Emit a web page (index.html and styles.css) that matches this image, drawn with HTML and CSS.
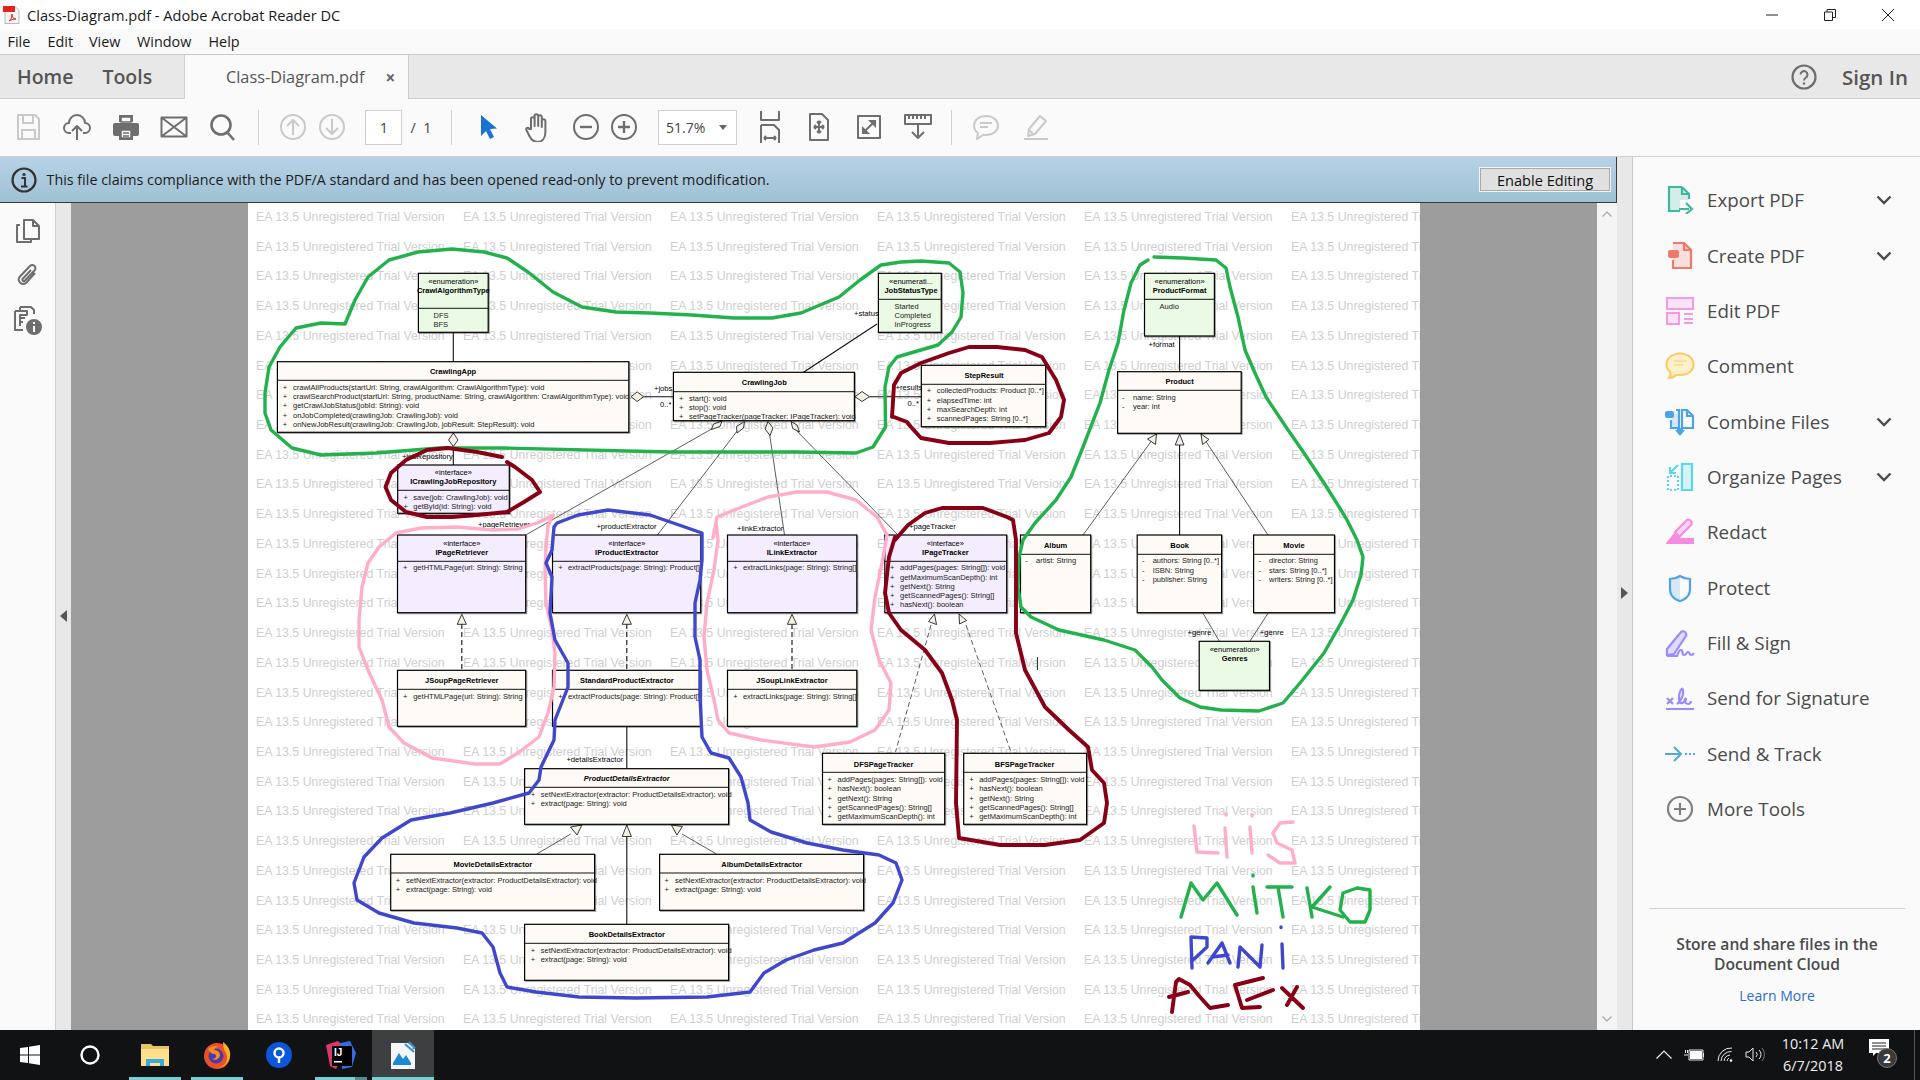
FILE: index.html
```html
<!DOCTYPE html>
<html lang="en">
<head>
<meta charset="utf-8">
<title>Class-Diagram.pdf - Adobe Acrobat Reader DC</title>
<link rel="stylesheet" href="styles.css">
</head>
<body>
<div class="app">
  <header class="titlebar">
    <svg class="pdf-ico" viewBox="0 0 18 18" width="18" height="18"><path class="pdf-doc" d="M2 .5h10l4 4v13H2z"/><rect class="pdf-top" x="0" y="0" width="12" height="6"/><path class="pdf-glyph" d="M6 15c2-1 3-4 3-7 0 3 1 5 4 5-3 0-5 1-7 2z"/></svg>
    <span class="title-text">Class-Diagram.pdf - Adobe Acrobat Reader DC</span>
    <div class="winctl">
      <svg viewBox="0 0 12 12" width="12" height="12"><path d="M0 6h12"/></svg>
      <svg viewBox="0 0 12 12" width="12" height="12"><path d="M.5 3h8v8.500h-8zM3 3V.5h8.500v8H8.500"/></svg>
      <svg viewBox="0 0 12 12" width="12" height="12"><path d="M0 0l12 12M12 0L0 12"/></svg>
    </div>
  </header>

  <nav class="menubar"><span>File</span><span>Edit</span><span>View</span><span>Window</span><span>Help</span></nav>

  <div class="tabbar">
    <div class="tab-home"><span>Home</span><span>Tools</span></div>
    <div class="tab-doc"><span class="tab-name">Class-Diagram.pdf</span><span class="tab-x">×</span></div>
    <div class="tab-right">
      <svg viewBox="0 0 26 26" width="26" height="26"><circle class="help-ring" cx="13" cy="13" r="11.500"/><path class="help-q" d="M9.500 10.500a3.500 3.500 0 1 1 5.500 3c-1.300.9-2 1.400-2 3"/><circle class="help-dot" cx="13" cy="19.500" r="1.200"/></svg>
      <span class="signin">Sign In</span>
    </div>
  </div>

  <div class="toolbar">
    <div class="tb-group g-file">
      <span class="tb-btn off"><svg class="ic" viewBox="0 0 28 28" width="28" height="28"><path d="M4 2h17l4 4v20H4zM9 2v8h10V2M8 26v-9h13v9"/></svg></span>
      <span class="tb-btn"><svg class="ic" viewBox="0 0 28 28" width="28" height="28"><path d="M8 20H6a5 5 0 0 1 0-10 8 8 0 0 1 16 0 5 5 0 0 1 0 10h-2M14 27V13M9 18l5-5 5 5"/></svg></span>
      <span class="tb-btn"><svg viewBox="0 0 28 28" width="28" height="28"><path class="ic-fill" d="M7 2h14v7H7zM3 10h22a2 2 0 0 1 2 2v9a2 2 0 0 1-2 2h-4v4H7v-4H3a2 2 0 0 1-2-2v-9a2 2 0 0 1 2-2z"/><path class="ic-white" d="M9 4h10v5H9zM9 17h10v8H9z"/><path class="ic-line" d="M11 20h6M11 23h6"/></svg></span>
      <span class="tb-btn"><svg class="ic" viewBox="0 0 28 28" width="28" height="28"><path d="M1.500 4.500h25v19h-25zM1.500 4.500L26.500 23.500M26.500 4.500L1.500 23.500"/></svg></span>
      <span class="tb-btn"><svg class="ic thick" viewBox="0 0 28 28" width="28" height="28"><circle cx="12" cy="12" r="9.500"/><path d="M18 19l7 8"/></svg></span>
    </div>
    <span class="tb-sep sep-a"></span>
    <div class="tb-group g-nav">
      <span class="tb-btn off"><svg class="ic" viewBox="0 0 28 28" width="28" height="28"><circle cx="14" cy="14" r="12"/><path d="M14 22V7M8 13l6-6 6 6"/></svg></span>
      <span class="tb-btn off"><svg class="ic" viewBox="0 0 28 28" width="28" height="28"><circle cx="14" cy="14" r="12"/><path d="M14 6v15M8 15l6 6 6-6"/></svg></span>
    </div>
    <span class="page-input">1</span>
    <span class="page-total">/&nbsp;&nbsp;1</span>
    <span class="tb-sep sep-b"></span>
    <div class="tb-group g-select">
      <span class="tb-btn"><svg viewBox="0 0 18 26" width="18" height="26"><path class="ic-blue" d="M1 1v21l5-5 4 8 4-2-4-8 7-.5z"/></svg></span>
      <span class="tb-btn"><svg class="ic" viewBox="0 0 28 30" width="28" height="30"><path d="M8 17V7a1.800 1.800 0 0 1 3.600 0v7-10a1.800 1.800 0 0 1 3.600 0v10-9a1.800 1.800 0 0 1 3.600 0v10-6a1.800 1.800 0 0 1 3.600 0v11c0 6-3 10-8 10-4 0-6-2-8-6l-3-6c-1-2 2-3 3-1z"/></svg></span>
    </div>
    <div class="tb-group g-zoom">
      <span class="tb-btn"><svg class="ic" viewBox="0 0 28 28" width="28" height="28"><circle cx="14" cy="14" r="12"/><path class="bold" d="M8 14h12"/></svg></span>
      <span class="tb-btn"><svg class="ic" viewBox="0 0 28 28" width="28" height="28"><circle cx="14" cy="14" r="12"/><path class="bold" d="M8 14h12M14 8v12"/></svg></span>
    </div>
    <span class="zoom-box"><span>51.7%</span><i class="zoom-caret"></i></span>
    <div class="tb-group g-view">
      <span class="tb-btn"><svg class="ic" viewBox="0 0 22 32" width="22" height="32"><path d="M2 0v9h18V0M2 14h13l5 5v13M2 32V14M5 27h12M5 27l2-2M5 27l2 2M17 27l-2-2M17 27l-2 2"/></svg></span>
      <span class="tb-btn"><svg class="ic" viewBox="0 0 24 30" width="24" height="30"><path d="M3 2h12l6 6v20H3zM12 9v12M7 15h10M12 9l-2 2M12 9l2 2M12 21l-2-2M12 21l2-2M7 15l2-2M7 15l2 2M17 15l-2-2M17 15l-2 2"/></svg></span>
      <span class="tb-btn"><svg viewBox="0 0 26 26" width="26" height="26"><path class="ic" d="M2 2h22v22H2z"/><path class="ic-fill" d="M6 20v-8l8 8zM20 6v8l-8-8z"/><path class="ic" d="M9 17l8-8"/></svg></span>
      <span class="tb-btn"><svg class="ic" viewBox="0 0 30 30" width="30" height="30"><path d="M2 3h26v9H2zM6 3v4M10 3v4M14 3v4M18 3v4M22 3v4M15 12v14M9 20l6 6 6-6"/></svg></span>
    </div>
    <span class="tb-sep sep-c"></span>
    <div class="tb-group g-annot">
      <span class="tb-btn off"><svg class="ic" viewBox="0 0 28 26" width="28" height="26"><path d="M14 2c7 0 12 4 12 9.500S21 21 14 21h-3l-6 4 1-6c-3-2-4-5-4-7.500C2 6 7 2 14 2zM8 9h12M8 13h8"/></svg></span>
      <span class="tb-btn off"><svg class="ic" viewBox="0 0 28 28" width="28" height="28"><path d="M18 3l6 5-11 13-7 2 1-7zM6 16l6 6M2 26h24"/></svg></span>
    </div>
  </div>

  <main class="main">
    <div class="doc-col">
      <div class="banner">
        <svg viewBox="0 0 26 26" width="26" height="26"><circle class="info-ring" cx="13" cy="13" r="11.500"/><circle class="info-mark" cx="13" cy="7.500" r="1.600"/><path class="info-stem" d="M10.500 11h3.500v8M10 19.500h6.500"/></svg>
        <span class="banner-text">This file claims compliance with the PDF/A standard and has been opened read-only to prevent modification.</span>
        <span class="enable-btn">Enable Editing</span>
      </div>
      <div class="doc-row">
        <aside class="leftnav">
          <svg class="ic" viewBox="0 0 26 26" width="26" height="26"><path d="M9 2h9l6 6v13H9zM18 2v6h6M5 7H2v17h14v-3"/></svg>
          <svg class="ic" viewBox="0 0 26 26" width="26" height="26"><path d="M20 11L11 21a4.500 4.500 0 0 1-6.500-6L15 4a3 3 0 0 1 4.500 4.500L9.500 19a1.500 1.500 0 0 1-2-2L16 8"/></svg>
          <svg class="ic" viewBox="0 0 30 30" width="30" height="30"><path d="M2 5h12v4H7v11M2 5v19h8M7 1h11l3 3v4M7 1v4M7 12h5M7 16h3"/><circle class="ic-fill" cx="21" cy="21" r="8"/><path class="ic-wh" d="M21 20v6M21 16v2"/></svg>
        </aside>
        <div class="collapse-l"><i class="tri-left"></i></div>
        <div class="canvas">
          <div class="page">
            <div class="watermark"></div>
            <svg class="diagram" viewBox="248 203 1172 827" width="1172" height="827">
              <g class="links">
                <path d="M453.300 332v30M643.500 396.700h30M869.500 396.700h52M453.300 446v19M877 324l-73.500 48.300M1179.600 336v36M1179.600 445v90M626.800 726v43M626.800 836v88"/>
                <path class="thin" d="M715 427L525.700 535M739.500 428L657.400 535M769 430L784.500 535M794 428L898 535M1156.500 434L1083 535M1201 434L1268 535M1203 613.300L1219.200 641M1268 613.300L1250 641M570.700 834L536.800 854M682 834L716.400 854"/>
                <path class="dash" d="M461.800 624v46M626.800 624v46M792 624v46"/>
                <path class="dash thin" d="M931 625L895.500 752M966 625L1011 752"/>
              </g>
              <g class="arrows">
                <path d="M631 396.700l6.200-4.800 6.300 4.800-6.300 4.800zM448.600 440l4.700-7 4.700 7-4.700 6.500zM855 396.700l7-5.200 7.500 5.200-7.500 4.800z"/>
                <path d="M722 421l-2 5.500-8.500 3 2-5.500zM744.500 421.500l-1 6.500-6.500 5-.5-6.500zM768 421.500l5 6.500-3 7.500-5-6.500zM791 421.500l6 3.500 2.500 7-6.800-3.500z"/>
                <path d="M1156.500 434l-1 10.500-8-5.500zM1179.600 434l4.400 11h-8.800zM1201 434l8 5.500-6.500 5zM461.800 614.300l4.600 10h-9.200zM626.800 614.300l4.600 10h-9.200zM792 614.300l4.600 10h-9.200zM934.500 614l2 10.500-8-3zM959 614l7.500 6.500-7 3.500zM582 825l-5 10-6.500-8zM626.800 825l4.600 11.500h-9.200zM671.400 825l11 1.500-5.500 8.500z"/>
              </g>
              <g class="nodes">
                <rect class="enum" x="418.400" y="273.300" width="69.800" height="59"/>
                <rect class="klass" x="277.400" y="361.700" width="351.400" height="70.600"/>
                <rect class="iface" x="397.700" y="465" width="111.600" height="48.300"/>
                <rect class="klass" x="673.400" y="372.300" width="181" height="48.400"/>
                <rect class="enum" x="878.400" y="273.300" width="62.900" height="59"/>
                <rect class="klass" x="921.300" y="365.300" width="124.300" height="61.400"/>
                <rect class="enum" x="1144.500" y="273.300" width="69.900" height="62.700"/>
                <rect class="klass" x="1117.600" y="371.700" width="123.600" height="61.600"/>
                <rect class="iface" x="397.500" y="535" width="128.200" height="77.700"/>
                <rect class="iface" x="552.500" y="535" width="148.200" height="77.700"/>
                <rect class="iface" x="727.500" y="535" width="129.300" height="77.700"/>
                <rect class="iface" x="884.800" y="535" width="121.900" height="77.700"/>
                <rect class="klass" x="1020.500" y="535" width="70.200" height="77.700"/>
                <rect class="klass" x="1137.200" y="535" width="84.400" height="77.700"/>
                <rect class="klass" x="1253.600" y="535" width="80.900" height="77.700"/>
                <rect class="enum" x="1199.200" y="641.300" width="70.300" height="49"/>
                <rect class="klass" x="397.500" y="670.300" width="128.200" height="56"/>
                <rect class="klass" x="552.500" y="670.300" width="148.200" height="56"/>
                <rect class="klass" x="727.500" y="670.300" width="129.300" height="56"/>
                <rect class="klass" x="822.500" y="753.300" width="122.200" height="71"/>
                <rect class="klass" x="963.700" y="753.300" width="122.900" height="71"/>
                <rect class="klass" x="524.600" y="768.700" width="204" height="55.600"/>
                <rect class="klass" x="390.700" y="854.300" width="203.900" height="56"/>
                <rect class="klass" x="659.600" y="854.300" width="204" height="56"/>
                <rect class="klass" x="524.600" y="924.300" width="204" height="56"/>
                <path class="dividers" d="M418.400 308.300h69.800M277.400 380.300h351.400M397.700 490.300h111.600M673.400 391.700h181M878.400 299.300h62.900M921.300 384.300h124.300M1144.500 299.300h69.900M1117.600 390.300h123.600M397.500 561.300h128.200M552.500 561.300h148.200M727.500 561.300h129.300M884.800 561.300h121.900M1020.500 554.300h70.200M1137.200 554.300h84.400M1253.600 554.300h80.900M397.500 689.300h128.200M552.500 689.300h148.200M727.500 689.300h129.300M822.500 772.300h122.200M963.700 772.300h122.900M524.600 787.300h204M390.700 873h203.900M659.600 873h204M524.600 943.300h204"/>
              </g>
              <g class="uml">
                <text class="st" x="453.300" y="281.700">«enumeration»</text><text class="nm" x="453.300" y="290.700">CrawlAlgorithmType</text>
                <text class="m" x="433.500" y="315.300">DFS</text><text class="m" x="433.500" y="324.300">BFS</text>

                <text class="nm" x="453" y="371.700">CrawlingApp</text>
                <text class="m" x="282.800" y="387.700">+</text><text class="m" x="293" y="387.700">crawlAllProducts(startUrl: String, crawlAlgorithm: CrawlAlgorithmType): void</text>
                <text class="m" x="282.800" y="396.700">+</text><text class="m" x="293" y="396.700">crawlSearchProduct(startUrl: String, productName: String, crawlAlgorithm: CrawlAlgorithmType): void</text>
                <text class="m" x="282.800" y="405.700">+</text><text class="m" x="293" y="405.700">getCrawlJobStatus(jobId: String): void</text>
                <text class="m" x="282.800" y="415.700">+</text><text class="m" x="293" y="415.700">onJobCompleted(crawlingJob: CrawlingJob): void</text>
                <text class="m" x="282.800" y="424.700">+</text><text class="m" x="293" y="424.700">onNewJobResult(crawlingJob: CrawlingJob, jobResult: StepResult): void</text>

                <text class="nm" x="764.300" y="382.700">CrawlingJob</text>
                <text class="m" x="679" y="398.300">+</text><text class="m" x="689" y="398.300">start(): void</text>
                <text class="m" x="679" y="407.300">+</text><text class="m" x="689" y="407.300">stop(): void</text>
                <text class="m" x="679" y="416.300">+</text><text class="m" x="689" y="416.300">setPageTracker(pageTracker: IPageTracker): void</text>

                <text class="st" x="453.300" y="472.700">«interface»</text><text class="nm" x="453.300" y="481.700">ICrawlingJobRepository</text>
                <text class="m" x="403.600" y="497.700">+</text><text class="m" x="413.300" y="497.700">save(job: CrawlingJob): void</text>
                <text class="m" x="403.600" y="506.700">+</text><text class="m" x="413.300" y="506.700">getById(id: String): void</text>

                <text class="st" x="911" y="281.700">«enumerati...</text><text class="nm" x="911" y="290.700">JobStatusType</text>
                <text class="m" x="894.500" y="306.700">Started</text><text class="m" x="894.500" y="315.700">Completed</text><text class="m" x="894.500" y="324.700">InProgress</text>

                <text class="nm" x="984" y="375.700">StepResult</text>
                <text class="m" x="926.800" y="390.300">+</text><text class="m" x="936.800" y="390.300">collectedProducts: Product [0..*]</text>
                <text class="m" x="926.800" y="400.300">+</text><text class="m" x="936.800" y="400.300">elapsedTime: int</text>
                <text class="m" x="926.800" y="409.300">+</text><text class="m" x="936.800" y="409.300">maxSearchDepth: int</text>
                <text class="m" x="926.800" y="418.300">+</text><text class="m" x="936.800" y="418.300">scannedPages: String [0..*]</text>

                <text class="st" x="1179.600" y="281.700">«enumeration»</text><text class="nm" x="1179.600" y="290.700">ProductFormat</text>
                <text class="m" x="1159.600" y="306.700">Audio</text>

                <text class="nm" x="1179.600" y="381.700">Product</text>
                <text class="m" x="1122" y="397.700">-</text><text class="m" x="1133" y="397.700">name: String</text>
                <text class="m" x="1122" y="406.700">-</text><text class="m" x="1133" y="406.700">year: int</text>

                <text class="st" x="461.800" y="543.700">«interface»</text><text class="nm" x="461.800" y="552.300">IPageRetriever</text>
                <text class="m" x="403" y="567.700">+</text><text class="m" x="413.200" y="567.700">getHTMLPage(url: String): String</text>
                <text class="st" x="626.800" y="543.700">«interface»</text><text class="nm" x="626.800" y="552.300">IProductExtractor</text>
                <text class="m" x="558.200" y="567.700">+</text><text class="m" x="567.900" y="567.700">extractProducts(page: String): Product[]</text>
                <text class="st" x="792" y="543.700">«interface»</text><text class="nm" x="792" y="552.300">ILinkExtractor</text>
                <text class="m" x="733.200" y="567.700">+</text><text class="m" x="742.900" y="567.700">extractLinks(page: String): String[]</text>

                <text class="st" x="945.400" y="543.700">«interface»</text><text class="nm" x="945.400" y="552.300">IPageTracker</text>
                <text class="m" x="890" y="567.700">+</text><text class="m" x="900" y="567.700">addPages(pages: String[]): void</text>
                <text class="m" x="890" y="577.300">+</text><text class="m" x="900" y="577.300">getMaximumScanDepth(): int</text>
                <text class="m" x="890" y="586.300">+</text><text class="m" x="900" y="586.300">getNext(): String</text>
                <text class="m" x="890" y="595.700">+</text><text class="m" x="900" y="595.700">getScannedPages(): String[]</text>
                <text class="m" x="890" y="604.700">+</text><text class="m" x="900" y="604.700">hasNext(): boolean</text>

                <text class="nm" x="1055.600" y="545.700">Album</text>
                <text class="m" x="1025.300" y="560.700">-</text><text class="m" x="1036" y="560.700">artist: String</text>
                <text class="nm" x="1179.600" y="545.700">Book</text>
                <text class="m" x="1142" y="560.700">-</text><text class="m" x="1152.700" y="560.700">authors: String [0..*]</text>
                <text class="m" x="1142" y="570.700">-</text><text class="m" x="1152.700" y="570.700">ISBN: String</text>
                <text class="m" x="1142" y="579.700">-</text><text class="m" x="1152.700" y="579.700">publisher: String</text>
                <text class="nm" x="1294" y="545.700">Movie</text>
                <text class="m" x="1258.500" y="560.700">-</text><text class="m" x="1269" y="560.700">director: String</text>
                <text class="m" x="1258.500" y="570.700">-</text><text class="m" x="1269" y="570.700">stars: String [0..*]</text>
                <text class="m" x="1258.500" y="579.700">-</text><text class="m" x="1269" y="579.700">writers: String [0..*]</text>

                <text class="st" x="1234.700" y="649.700">«enumeration»</text><text class="nm" x="1234.700" y="658.700">Genres</text>

                <text class="nm" x="461.800" y="680.700">JSoupPageRetriever</text>
                <text class="m" x="403" y="696.700">+</text><text class="m" x="413.200" y="696.700">getHTMLPage(url: String): String</text>
                <text class="nm" x="626.800" y="680.700">StandardProductExtractor</text>
                <text class="m" x="558.200" y="696.700">+</text><text class="m" x="567.900" y="696.700">extractProducts(page: String): Product[]</text>
                <text class="nm" x="792" y="680.700">JSoupLinkExtractor</text>
                <text class="m" x="733.200" y="696.700">+</text><text class="m" x="742.900" y="696.700">extractLinks(page: String): String[]</text>

                <text class="nm" x="883.600" y="764.300">DFSPageTracker</text>
                <text class="m" x="827.500" y="779.300">+</text><text class="m" x="837.500" y="779.300">addPages(pages: String[]): void</text>
                <text class="m" x="827.500" y="788.300">+</text><text class="m" x="837.500" y="788.300">hasNext(): boolean</text>
                <text class="m" x="827.500" y="798.300">+</text><text class="m" x="837.500" y="798.300">getNext(): String</text>
                <text class="m" x="827.500" y="807.300">+</text><text class="m" x="837.500" y="807.300">getScannedPages(): String[]</text>
                <text class="m" x="827.500" y="816.300">+</text><text class="m" x="837.500" y="816.300">getMaximumScanDepth(): int</text>
                <text class="nm" x="1024.600" y="764.300">BFSPageTracker</text>
                <text class="m" x="969.200" y="779.300">+</text><text class="m" x="979.200" y="779.300">addPages(pages: String[]): void</text>
                <text class="m" x="969.200" y="788.300">+</text><text class="m" x="979.200" y="788.300">hasNext(): boolean</text>
                <text class="m" x="969.200" y="798.300">+</text><text class="m" x="979.200" y="798.300">getNext(): String</text>
                <text class="m" x="969.200" y="807.300">+</text><text class="m" x="979.200" y="807.300">getScannedPages(): String[]</text>
                <text class="m" x="969.200" y="816.300">+</text><text class="m" x="979.200" y="816.300">getMaximumScanDepth(): int</text>

                <text class="nm ital" x="626.800" y="778.700">ProductDetailsExtractor</text>
                <text class="m" x="530.700" y="794.300">+</text><text class="m" x="540.700" y="794.300">setNextExtractor(extractor: ProductDetailsExtractor): void</text>
                <text class="m" x="530.700" y="803.700">+</text><text class="m" x="540.700" y="803.700">extract(page: String): void</text>
                <text class="nm" x="492.900" y="864.300">MovieDetailsExtractor</text>
                <text class="m" x="395.700" y="880.300">+</text><text class="m" x="406" y="880.300">setNextExtractor(extractor: ProductDetailsExtractor): void</text>
                <text class="m" x="395.700" y="889.300">+</text><text class="m" x="406" y="889.300">extract(page: String): void</text>
                <text class="nm" x="761.800" y="864.300">AlbumDetailsExtractor</text>
                <text class="m" x="664.600" y="880.300">+</text><text class="m" x="675" y="880.300">setNextExtractor(extractor: ProductDetailsExtractor): void</text>
                <text class="m" x="664.600" y="889.300">+</text><text class="m" x="675" y="889.300">extract(page: String): void</text>
                <text class="nm" x="626.800" y="934.300">BookDetailsExtractor</text>
                <text class="m" x="530.700" y="950.300">+</text><text class="m" x="540.700" y="950.300">setNextExtractor(extractor: ProductDetailsExtractor): void</text>
                <text class="m" x="530.700" y="959.300">+</text><text class="m" x="540.700" y="959.300">extract(page: String): void</text>

                <text class="lb" x="654" y="388.700">+jobs</text><text class="lb" x="660" y="404.700">0..*</text>
                <text class="lb" x="854" y="313.700">+status</text>
                <text class="lb" x="895.500" y="387.700">+results</text><text class="lb" x="907.500" y="403.300">0..*</text>
                <text class="lb" x="1148.600" y="344.700">+format</text>
                <text class="lb" x="402" y="456.700">+jobRepository</text>
                <text class="lb" x="478" y="524.700">+pageRetriever</text>
                <text class="lb" x="596.400" y="526.700">+productExtractor</text>
                <text class="lb" x="737" y="528.700">+linkExtractor</text>
                <text class="lb" x="909" y="526.700">+pageTracker</text>
                <text class="lb" x="566.400" y="759.300">+detailsExtractor</text>
                <text class="lb" x="1187.500" y="632.700">+genre</text><text class="lb" x="1259.800" y="632.700">+genre</text>
              </g>
              <path class="caret" d="M1037.400 657v13"/>
              <g class="ink">
                <path class="green" d="M345 324L355 300L368 277L389 260L418 252L452 249L484 252L507 258L528 272L553 292L582 307L616 312L650 313L692 315L734 318L772 318L801 313L839 297L860 280L881 265L901 262L921 261L949 263L960 272L963 293L961 317L952 332L938 345L914 352L897 357L889 367L885 387L885.500 427L873 447L856 453L797 452L671 452L502 448L439 448L376 453L321 455L292 448L271 430L265 413L265 393L269 367L280 347L296 328L321 323Z"/>
                <path class="green" d="M1154 257L1183 258L1216 260L1226 268L1230 287L1238 317L1245 350L1255 373L1266 397L1286 427L1304 453L1324 483L1341 510L1347 520L1357 540L1363 557L1361 575L1353 600L1341 623L1324 653L1300 683L1283 703L1259 711L1221 710L1200 707L1180 698L1162 680L1152 667L1135 650L1104 640L1059 630L1031 617L1021 607L1018 587L1019 557L1023 540L1035 523L1056 500L1071 477L1083 447L1100 403L1109 370L1118 343L1124 310L1131 283L1140 265L1148 260"/>
                <path class="red" d="M502 457L477 452L448 448L427 450L406 460L391 473L385.500 487L391 500L406 512L427 517L452 517L477 515L507 512L524 502L540 492L532 480L515 467L507 462"/>
                <path class="red" d="M892 417L894 385L901 373L921 363L949 353L969 347L997 347L1025 350L1042 357L1056 380L1064 400L1061 417L1049 433L1025 440L990 443L949 443L921 438L911 427L907 422L894 417"/>
                <path class="red" d="M895 540L908 525L925 513L942 508L983 508L1007 517L1013 520L1016 540L1016 603L1016 633L1025 670L1045 707L1069 730L1088 747L1092 770L1104 783L1107 803L1104 823L1080 840L1045 845L1000 845L959 838L956 803L957 720L952 700L942 673L925 650L901 630L889 613L885 593L889 557L895 537"/>
                <path class="pink" d="M553 515L540 522L518 529L493 530L457 527L421 528L396 533L379 547L368 563L362 587L359 620L359 647L368 670L382 700L389 727L404 743L432 758L475 764L500 764L518 753L539 737L548 713L554 687L555 653L552 630L546 603L545 570L546 547L548 526L552 516"/>
                <path class="pink" d="M713 538L717 517L734 510L768 497L797 492L827 492L856 500L877 517L887 535L882 563L875 597L871 630L879 660L891 683L889 710L875 730L850 742L814 747L761 740L729 733L718 720L714 700L707 670L704 637L707 603L714 570L718 540L716 522"/>
                <path class="blue" d="M557 523L578 515L608 510L650 515L679 525L702 533L702 560L700 580L695 603L695 637L700 660L700 697L702 737L711 753L729 758L741 777L748 803L750 820L771 832L807 843L843 850L879 855L896 863L902 880L893 903L875 923L843 943L814 950L786 960L764 973L750 992L707 997L636 998L579 997L536 992L507 987L500 973L493 947L482 933L457 928L414 923L379 913L357 900L354 883L364 857L382 838L411 820L450 813L493 803L529 793L539 780L541 767L554 740L555 720L568 687L568 663L555 640L550 613L552 577L546 563L552 550L554 527Z"/>
                <path class="pink" d="M1194 826L1197 852L1218 853M1226 814v1M1225 828L1227 857M1252 815v1M1250 827L1252 853M1293 822L1280 823L1273 833L1277 843L1292 850L1295 863L1280 863L1268 855"/>
                <path class="green" d="M1181 917L1191 883L1203 900L1217 883L1237 915M1253 875v1M1253 887L1257 913M1267 887L1292 887M1278 887L1283 917M1307 888L1312 917M1330 887L1312 907L1343 917M1343 893L1340 910L1350 922L1365 922L1370 910L1370 890L1357 888Z"/>
                <path class="blue" d="M1191 937L1192 968M1191 937L1207 938L1207 947L1193 960M1208 963L1222 943L1230 963M1212 957L1228 955M1238 967L1240 947L1260 967L1262 945M1282 944L1283 968M1281 927v.5"/>
                <path class="red" d="M1172 1012L1176 982L1179 979L1190 985L1200 997L1210 1008L1228 1005M1169 997L1188 992M1263 978L1235 985L1242 1008L1260 1007M1247 1000L1273 990M1282 988L1303 1008M1297 987L1287 1005"/>
              </g>
            </svg>
          </div>
        </div>
        <div class="scrollbar">
          <svg viewBox="0 0 10 6" width="10" height="6"><path d="M.5 5.500L5 1l4.500 4.500"/></svg>
          <svg viewBox="0 0 10 6" width="10" height="6"><path d="M.5.500L5 5l4.500-4.500"/></svg>
        </div>
      </div>
    </div>
    <div class="gutter"><i class="tri-right"></i></div>
    <aside class="tools">
      <ul class="tool-list">
        <li class="tool"><svg viewBox="0 0 28 28" width="28" height="28"><path class="f-green" d="M3 1h13l7 7v6H14v11H3z"/><path class="s-green" d="M16 1H3v24h11M16 1v7h7v5M16 1l7 7"/><path class="s-green" d="M13 23h10M20 17l6 6-6 5"/></svg><span>Export PDF</span><svg class="chev" viewBox="0 0 16 10" width="16" height="10"><path d="M1.500 1.500L8 8l6.500-6.500"/></svg></li>
        <li class="tool"><svg viewBox="0 0 28 28" width="28" height="28"><path class="f-red" d="M7 1h11l7 7v18H7z"/><path class="s-red" d="M7 1h11l7 7v18H7v-8M18 1v7h7"/><rect class="r-red" x="2" y="8" width="11" height="8" rx="2"/></svg><span>Create PDF</span><svg class="chev" viewBox="0 0 16 10" width="16" height="10"><path d="M1.500 1.500L8 8l6.500-6.500"/></svg></li>
        <li class="tool"><svg viewBox="0 0 28 28" width="28" height="28"><path class="f-pink" d="M1 1h26v11H1zM1 16h12v11H1z"/><path class="s-pink" d="M1 1h26v11H1zM1 16h12v11H1zM18 17h9M18 22h9M18 26h9"/></svg><span>Edit PDF</span></li>
        <li class="tool"><svg viewBox="0 0 30 28" width="30" height="28"><path class="f-yel s-yel" d="M15 1.500c8 0 13.500 5 13.500 11S23 23 15 23c-2 0-3 0-4 0-2 2-4 3-7 3 1-2 2-3 1.500-5.500C3 18 1.500 15.500 1.500 12.500 1.500 6.500 7 1.500 15 1.500z"/><path class="s-yel thin" d="M9 9h13M9 13h9"/></svg><span>Comment</span></li>
        <li class="tool"><svg viewBox="0 0 30 28" width="30" height="28"><path class="f-blue" d="M7 6h8v14H7z"/><path class="s-blue" d="M6 12v8h8V2h-3M17 2v18h11V8l-6-6zM22 2v6h6"/><rect class="r-blue" x="0" y="3" width="9" height="7" rx="2"/><path class="r-blue" d="M12 22h6v-2h-6zM10 22h10l-5 6z"/></svg><span>Combine Files</span><svg class="chev" viewBox="0 0 16 10" width="16" height="10"><path d="M1.500 1.500L8 8l6.500-6.500"/></svg></li>
        <li class="tool"><svg viewBox="0 0 28 28" width="28" height="28"><path class="f-cyan" d="M16 1h10v26H16z"/><path class="s-cyan" d="M16 1h10v26H16z"/><path class="s-cyan dotted" d="M2 13v14h10V13z"/><path class="s-cyan" d="M12 2L4 10M4 4v6h6"/></svg><span>Organize Pages</span><svg class="chev" viewBox="0 0 16 10" width="16" height="10"><path d="M1.500 1.500L8 8l6.500-6.500"/></svg></li>
        <li class="tool"><svg viewBox="0 0 28 28" width="28" height="28"><path class="s-mag f-mag" d="M9 14L21 2c1-1 3 0 4 1s1 3 0 4L13 19z"/><path class="r-mag" d="M5 19l3-4 5 5H28v6H0v-1z"/></svg><span>Redact</span></li>
        <li class="tool"><svg viewBox="0 0 28 28" width="28" height="28"><path class="f-blue" d="M14 2v25l-3-1c-4-2-7-6-7-11V5z"/><path class="s-blue" d="M14 2c3 2 7 3 10 3v10c0 5-3 9-7 11l-3 1-3-1c-4-2-7-6-7-11V5c3 0 7-1 10-3z"/></svg><span>Protect</span></li>
        <li class="tool"><svg viewBox="0 0 30 28" width="30" height="28"><path class="s-vio f-vio" d="M2 26V20L16 3c1-1 3-1 4 0 1 1 2 3 1 4L9 25z"/><path class="s-vio" d="M2 27h10c1-1 1-6 4-6s0 5 3 5 2-3 4-3 1 3 3 3 3-2 3-2"/></svg><span>Fill &amp; Sign</span></li>
        <li class="tool"><svg viewBox="0 0 30 28" width="30" height="28"><path class="s-vio" d="M2 14l6 6M8 14l-6 6M12 20c4-3 7-9 6-14-1-4-4 2-4 8s2 6 5 4 2-4 1-3 0 5 3 5 3-3 3-3M1 25h28"/></svg><span>Send for Signature</span></li>
        <li class="tool"><svg viewBox="0 0 30 28" width="30" height="28"><path class="s-sky" d="M0 14h15M9 7l7 7-7 7"/><path class="s-sky dots" d="M20 14h10"/></svg><span>Send &amp; Track</span></li>
        <li class="tool"><svg viewBox="0 0 28 28" width="28" height="28"><circle class="s-gray" cx="14" cy="14" r="12"/><path class="s-gray" d="M14 8v12M8 14h12"/></svg><span>More Tools</span></li>
      </ul>
      <div class="cloud">
        <p class="cloud-text">Store and share files in the Document Cloud</p>
        <a class="cloud-link">Learn More</a>
      </div>
    </aside>
  </main>

  <footer class="taskbar">
    <span class="tk-sys"><svg viewBox="0 0 20 20" width="20" height="20"><path class="wh" d="M0 3l8-1v7.500H0zM9 1.800L20 0v9.500H9zM0 10.500h8V18l-8-1zM9 10.500h11V20L9 18.200z"/></svg></span>
    <span class="tk-sys"><svg viewBox="0 0 20 20" width="20" height="20"><circle class="cort" cx="10" cy="10" r="8.500"/></svg></span>
    <span class="tk-app run"><svg viewBox="0 0 28 24" width="28" height="24"><path class="folder-back" d="M0 1h10l2 2h16v20H0z"/><path class="folder-front" d="M0 6h28v17H0z"/><path class="folder-tab" d="M5 23v-7h18v7h-4v-3H9v3z"/></svg></span>
    <span class="tk-app run"><svg viewBox="0 0 28 28" width="28" height="28"><circle class="fx-o" cx="14" cy="15" r="13"/><path class="fx-y" d="M20 1c6 4 9 11 6 18-2 5-7 8-12 8 7-1 11-6 10-12-1-4-4-6-4-14z"/><circle class="fx-p" cx="13" cy="15" r="7.500"/><path class="fx-o2" d="M5 8c3-3 8-4 11-2-3 0-4 1-5 3 3 0 6 2 6 5 0 4-5 6-8 4 4 0 5-3 3-5-2 0-4 0-7-5z"/></svg></span>
    <span class="tk-app"><svg viewBox="0 0 26 26" width="26" height="26"><circle class="st-blue" cx="13" cy="13" r="13"/><circle class="st-ring" cx="13" cy="11" r="4.500"/><path class="st-stem" d="M13 15v6"/></svg></span>
    <span class="tk-app run split"><svg viewBox="0 0 30 28" width="30" height="28"><path class="ij-a" d="M0 4l12-4 8 8-10 20-6-3z"/><path class="ij-b" d="M14 2l10-2 6 12-4 14-10 2z"/><rect class="ij-k" x="6" y="5" width="20" height="20"/><text class="ij-t" x="8" y="15">IJ</text><rect class="ij-u" x="8" y="20" width="8" height="1.500"/></svg></span>
    <span class="tk-app run active"><svg viewBox="0 0 26 28" width="26" height="28"><path class="ph-doc" d="M1 2h17l7 6v20H1z"/><path class="ph-sky" d="M3 22l6-10 4 6 3-4 5 8v2H3z"/><path class="ph-pin" d="M15 3l9 8M19 1l5 5M23 8l2-2"/></svg></span>
    <div class="tray">
      <svg class="t-up" viewBox="0 0 16 9" width="16" height="9"><path d="M.5 8.500L8 1l7.500 7.500"/></svg>
      <svg class="t-bat" viewBox="0 0 20 13" width="20" height="13"><path class="wh" d="M6 3h12v8H6z"/><path class="ln" d="M5 2h14v10H5zM19.500 5v4M0 7h4M1.500 5V2M3.500 5V2"/></svg>
      <svg class="t-wifi" viewBox="0 0 16 15" width="16" height="15"><path class="ln" d="M1 14A13 13 0 0 1 15 1M4 14A10 10 0 0 1 14.500 4.500M7 14A7 7 0 0 1 13 8M10 14a4 4 0 0 1 2-3"/><circle class="wh" cx="14" cy="13.500" r="1.300"/></svg>
      <svg class="t-vol" viewBox="0 0 20 15" width="20" height="15"><path class="ln" d="M1 5h3l4-4v13l-4-4H1zM11 5a3.500 3.500 0 0 1 0 5M14 3a6 6 0 0 1 0 9"/><path class="ln dim" d="M17 1a10 10 0 0 1 0 13"/></svg>
      <div class="clock"><span>10:12 AM</span><span>6/7/2018</span></div>
      <span class="note"><svg viewBox="0 0 20 17" width="20" height="17"><path class="wh" d="M0 0h20v14H7l-3 3v-3H0z"/><path class="note-ln" d="M3 4h14M3 7h14M3 10h14"/></svg><b class="note-badge">2</b></span>
      <i class="show-desk"></i>
    </div>
  </footer>
</div>
<script src="watermark.js"></script>
</body>
</html>
```
FILE: styles.css
```css
*{box-sizing:border-box}
html,body{margin:0;padding:0;height:100%;overflow:hidden}
body{font-family:"Open Sans","Noto Sans","Liberation Sans",sans-serif;color:#4b4b4b;background:#fafafa}
.app{display:flex;flex-direction:column;width:1920px;height:1080px}

/* title bar */
.titlebar{height:29px;background:#fff;display:flex;align-items:center;padding-left:3px;flex:none}
.pdf-ico{margin-right:6px}
.pdf-doc{fill:#f4f4f4;stroke:#b9b9b9}
.pdf-top{fill:#e2231a}
.pdf-glyph{fill:none;stroke:#e2231a;stroke-width:1}
.title-text{font-size:14.600px;color:#1a1a1a}
.winctl{margin-left:auto;display:flex;gap:46px;padding-right:26px;align-items:center}
.winctl path{fill:none;stroke:#222;stroke-width:1}

/* menu */
.menubar{height:26px;background:#f9f9f9;border-bottom:1px solid #c9c9c9;display:flex;padding-left:7.500px;align-items:center;font-size:14.400px;color:#1a1a1a;flex:none}
.menubar span:nth-child(1){width:40px}
.menubar span:nth-child(2){width:41.500px}
.menubar span:nth-child(3){width:48px}
.menubar span:nth-child(4){width:71.500px}

/* tabs */
.tabbar{height:44px;background:#e8e8e8;border-bottom:1px solid #cfcfcf;display:flex;flex:none}
.tab-home{width:184px;display:flex;padding-left:17px;gap:29px;align-items:center;font-size:19.500px;font-weight:600;color:#555}
.tab-doc{width:225px;height:44px;background:#fafafa;border:1px solid #cfcfcf;border-width:0 1px;display:flex;align-items:center;padding-left:41px;font-size:16.300px;color:#555;position:relative}
.tab-x{margin-left:21px;font-size:17px;font-weight:700;color:#666}
.tab-right{margin-left:auto;display:flex;align-items:center;padding-right:12px}
.help-ring{fill:none;stroke:#6e6e6e;stroke-width:2.200}
.help-q{fill:none;stroke:#6e6e6e;stroke-width:2}
.help-dot{fill:#6e6e6e}
.signin{font-size:20.500px;font-weight:600;color:#555;margin-left:25px}

/* toolbar */
.toolbar{height:58px;background:#fafafa;border-bottom:1px solid #cfcfcf;display:flex;align-items:center;flex:none;padding-bottom:1px}
.tb-group{display:flex;align-items:center}
.tb-btn{display:flex;align-items:center;justify-content:center;color:#6e6e6e}
.tb-btn.off{color:#c9c9c9}
.ic{fill:none;stroke:currentColor;stroke-width:2;stroke-linejoin:round;color:#6e6e6e}
.tb-btn.off .ic{color:#c9c9c9}
.ic.thick{stroke-width:2.600}
.ic .bold,.bold{stroke-width:2.400}
.ic-fill{fill:#6e6e6e;stroke:none}
.ic-white{fill:#fafafa;stroke:#6e6e6e;stroke-width:1.500}
.ic-line{stroke:#6e6e6e;stroke-width:1.500;fill:none}
.ic-blue{fill:#1873d3}
.ic-wh{stroke:#fff;stroke-width:2;fill:none}
.g-file{margin-left:4px}
.g-file .tb-btn{width:48.700px}
.tb-sep{width:1px;height:35px;background:#d2d2d2}
.sep-a{margin-left:10.500px}
.g-nav{margin-left:15px}
.g-nav .tb-btn{width:38.500px}
.page-input{margin-left:14.500px;width:37px;height:35px;background:#fff;border:1px solid #cfcfcf;display:flex;align-items:center;justify-content:center;font-size:14.500px;color:#444}
.page-total{margin-left:8px;width:20px;font-size:14.500px;color:#444;white-space:nowrap}
.sep-b{margin-left:21px}
.g-select{margin-left:12.500px}
.g-select .tb-btn{width:48px}
.g-zoom{margin-left:6px}
.g-zoom .tb-btn{width:38px}
.zoom-box{margin-left:15px;width:79px;height:35px;background:#fff;border:1px solid #cfcfcf;display:flex;align-items:center;padding-left:7px;font-size:14px;color:#444}
.zoom-caret{margin-left:auto;margin-right:9px;width:0;height:0;border:4px solid transparent;border-top:5px solid #666;border-bottom:0}
.g-view{margin-left:8px}
.g-view .tb-btn{width:49.500px}
.sep-c{margin-left:8px}
.g-annot{margin-left:9px}
.g-annot .tb-btn{width:50px}

/* main */
.main{flex:1;display:flex;min-height:0}
.doc-col{width:1617px;display:flex;flex-direction:column;flex:none}
.banner{height:46px;background:linear-gradient(#b7d2e6,#9fc1d4);border-right:1px solid #3a3a3a;border-bottom:1px solid #3a3a3a;display:flex;align-items:center;padding-left:11px;padding-right:6px;flex:none}
.info-ring{fill:none;stroke:#333;stroke-width:2.200}
.info-mark{fill:#333}
.info-stem{fill:none;stroke:#333;stroke-width:2}
.banner-text{margin-left:9.500px;font-size:14.330px;color:#1c1c1c}
.enable-btn{margin-left:auto;width:130px;height:23px;background:#e0e0e0;border:1px solid #a9a9a9;outline:1px solid #f4f4f4;display:flex;align-items:center;justify-content:center;font-size:14.600px;color:#111}
.doc-row{flex:1;display:flex;min-height:0}
.leftnav{width:56px;background:#fafafa;border-right:1px solid #cfcfcf;display:flex;flex-direction:column;align-items:center;gap:18px;padding-top:15px;flex:none}
.collapse-l{width:15px;background:#e8e8e8;display:flex;align-items:center;justify-content:center;flex:none}
.tri-left{width:0;height:0;border:6px solid transparent;border-right:7px solid #555;border-left:0;margin-top:-2px}
.canvas{flex:1;background:#9d9d9d;display:flex;justify-content:center;min-width:0}
.page{width:1172px;background:#fff;position:relative;overflow:hidden;flex:none}
.watermark{display:grid;grid-template-columns:repeat(6,207px);grid-auto-rows:29.720px;padding-left:8px;font-family:"Liberation Sans",sans-serif;font-size:12.350px;line-height:29.720px;color:#cfcfcf;white-space:nowrap}
.diagram{position:absolute;left:0;top:0}
.scrollbar{width:20px;background:#f4f4f4;display:flex;flex-direction:column;justify-content:space-between;align-items:center;padding:8px 0;flex:none}
.scrollbar path{fill:none;stroke:#a6a6a6;stroke-width:1.200}
.gutter{width:16px;background:#e8e8e8;border-right:1px solid #c9c9c9;display:flex;align-items:center;justify-content:center;flex:none}
.tri-right{width:0;height:0;border:6px solid transparent;border-left:7px solid #555;border-right:0;margin-top:-2px}

/* diagram */
.links path{fill:none;stroke:#111;stroke-width:1.100}
.links .thin{stroke-width:.8;stroke:#333}
.links .dash{stroke-dasharray:5 3}
.arrows path{fill:#f6f1e6;stroke:#222;stroke-width:.9}
.nodes rect{stroke:#000;stroke-width:1.200;filter:drop-shadow(1px 1px .6px rgba(0,0,0,.35))}
.klass{fill:#fefaf5}
.iface{fill:#f3edfd}
.enum{fill:#ebfae5}
.dividers{fill:none;stroke:#111;stroke-width:1}
.uml text{font-family:"Liberation Sans",sans-serif;dominant-baseline:central}
.m{font-size:7.520px;fill:#222}
.nm{font-size:7.500px;font-weight:700;fill:#000;text-anchor:middle}
.nm.ital{font-style:italic}
.st{font-size:7.500px;fill:#000;text-anchor:middle}
.lb{font-size:7.600px;fill:#000}
.caret{stroke:#222;stroke-width:1}
.ink path{fill:none;stroke-width:3.400;stroke-linejoin:round;stroke-linecap:round}
.ink .green{stroke:#22b14c}
.ink .red{stroke:#880015;stroke-width:3.900}
.ink .pink{stroke:#ffaec9}
.ink .blue{stroke:#3f48cc}

/* tools panel */
.tools{width:287px;background:#fafafa;display:flex;flex-direction:column;flex:none}
.tool-list{list-style:none;margin:0;padding:15.500px 28px 0 32px}
.tool{height:55.350px;display:flex;align-items:center;font-size:18.800px;color:#4b4b4b}
.tool>svg:first-child{width:30px;flex:none;margin-right:12px}
.chev{margin-left:auto}
.chev path{fill:none;stroke:#4b4b4b;stroke-width:2.400}
.f-green{fill:#d3eee7}.s-green{fill:none;stroke:#3fb89b;stroke-width:2.200}
.f-red{fill:#fadfdc}.s-red{fill:none;stroke:#f0796e;stroke-width:2.200}.r-red{fill:#f0796e}
.f-pink{fill:#fae3f7}.s-pink{fill:none;stroke:#f49ae4;stroke-width:2}
.f-yel{fill:#fff0cc}.s-yel{stroke:#ffc966;stroke-width:2.200}
.s-yel.thin{fill:none;stroke-width:1.200}
.f-blue{fill:#d6e8f8}.s-blue{fill:none;stroke:#4ea3e8;stroke-width:2.200}.r-blue{fill:#4ea3e8}
.f-cyan{fill:#d7f3f8}.s-cyan{fill:none;stroke:#5bd5e8;stroke-width:2.200}.s-cyan.dotted{stroke-dasharray:2 2}
.f-mag{fill:#fbd6f3}.s-mag{stroke:#f78be0;stroke-width:2.200}.r-mag{fill:#f78be0}
.f-vio{fill:#e1dcff}.s-vio{stroke:#9a8cff;stroke-width:2.200;fill:none}.s-vio.f-vio{fill:#e1dcff}
.s-sky{fill:none;stroke:#4ea9d8;stroke-width:2}.s-sky.dots{stroke-dasharray:2 2}
.s-gray{fill:none;stroke:#808080;stroke-width:2.200}
.cloud{margin:auto 15px 0 16px;height:122px;border-top:1px solid #cfcfcf;text-align:center;padding-top:25px}
.cloud-text{margin:0 auto;width:230px;font-size:15.600px;line-height:20px;font-weight:600;color:#4b4b4b}
.cloud-link{display:block;margin-top:12px;font-size:14px;color:#2a6fc9}

/* taskbar */
.taskbar{height:50px;background:#101214;display:flex;align-items:stretch;flex:none;color:#eee}
.tk-sys{width:60px;display:flex;align-items:center;justify-content:center}
.tk-sys+.tk-sys{margin-right:3.500px}
.wh{fill:#fff}
.cort{fill:none;stroke:#fff;stroke-width:2.400}
.tk-app{width:62px;display:flex;align-items:center;justify-content:center;position:relative}
.tk-app.run::after{content:"";position:absolute;left:5px;right:5px;bottom:0;height:3px;background:#76d0d6}
.tk-app.split::before{content:"";position:absolute;left:45.500px;right:5px;bottom:0;height:3px;background:#4f8d92;z-index:1}
.tk-app.active{background:#3d3f41}
.tk-app.active::after{left:0;right:0}
.folder-back{fill:#e2c36a}.folder-front{fill:#fde08c}.folder-tab{fill:#39a9e0}
.fx-o{fill:#e8502b}.fx-y{fill:#fbb024}.fx-p{fill:#4a3aa8}.fx-o2{fill:#f58a22}
.st-blue{fill:#0b57d9}.st-ring{fill:none;stroke:#fff;stroke-width:2.400}.st-stem{stroke:#fff;stroke-width:2.400}
.ij-a{fill:#d93a6e}.ij-b{fill:#3a6ae0}.ij-k{fill:#000}.ij-u{fill:#fff}
.ij-t{font-family:"Liberation Sans",sans-serif;font-weight:700;font-size:10px;fill:#fff}
.ph-doc{fill:#f4f6f8}.ph-sky{fill:#1e88d8}.ph-pin{fill:none;stroke:#3a90d8;stroke-width:2}
.tray{margin-left:auto;display:flex;align-items:center;position:relative}
.tray .ln{fill:none;stroke:#e8e8e8;stroke-width:1}
.tray .dim{stroke:#777}
.t-up path{fill:none;stroke:#eee;stroke-width:1.200}
.t-up{margin-right:12px;margin-top:-2px}
.t-bat{margin-right:13px;margin-top:-2px}
.t-wifi{margin-right:12px;margin-top:-2px}
.t-vol{margin-right:17px;margin-top:-2px}
.clock{display:flex;flex-direction:column;align-items:center;font-size:14.400px;line-height:22px;width:62px;color:#eee;margin-right:25px;white-space:nowrap}
.note{width:29px;height:30px;position:relative;margin-right:16px;margin-top:-2px}
.note-ln{fill:none;stroke:#222;stroke-width:1}
.note-badge{position:absolute;left:8px;top:9px;width:20px;height:20px;border-radius:50%;background:#3a3a3a;border:1px solid #777;color:#fff;font-size:13px;font-weight:700;display:flex;align-items:center;justify-content:center}
.show-desk{width:1px;height:50px;background:#555;margin-right:5px}
```
FILE: watermark.js
```js
// Repeated "Trial Version" stamp printed across the whole PDF page.
var stamp = 'EA 13.5 Unregistered Trial Version';
var grid = document.querySelector('.watermark');
for (var i = 0; i < 28 * 6; i++) {
  var cell = document.createElement('span');
  cell.textContent = stamp;
  grid.appendChild(cell);
}
```
